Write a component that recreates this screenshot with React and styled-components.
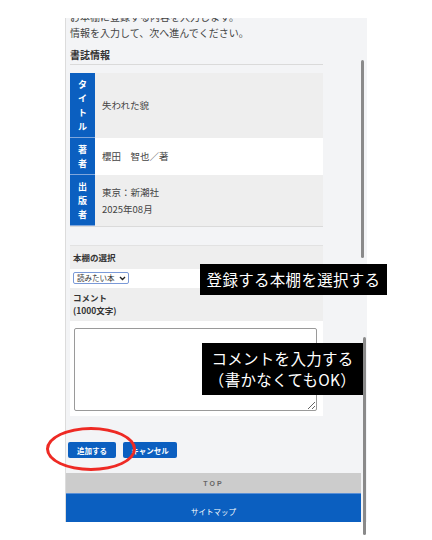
import styled, { createGlobalStyle } from "styled-components";

const blue = "#0b5fc0";
const jp = `"Noto Sans CJK JP", "Noto Sans", sans-serif`;

const Global = createGlobalStyle`
  html, body { margin: 0; background: #fff; }
  body { font-family: ${jp}; }
`;

const Page = styled.div`
  position: relative;
  width: 432px;
  height: 540px;
  padding: 18px 0 0 65px;
  box-sizing: border-box;
  overflow: hidden;
`;

const Screen = styled.div`
  width: 302px;
  height: 504px;
  background: #f3f4f6;
  border-left: 1px solid #dcdcdc;
  box-sizing: border-box;
  overflow: hidden;
  display: flex;
  flex-direction: column;
`;

const Content = styled.div`
  margin-top: -9px;
  padding: 0 0 0 4px;
  width: 253px;
`;

const Intro = styled.p`
  margin: 0;
  font-size: 10px;
  line-height: 16px;
  color: #444;
`;

const Heading = styled.h3`
  margin: 7px 0 0;
  padding-bottom: 2px;
  font-size: 10px;
  line-height: 14px;
  font-weight: 700;
  color: #333;
  border-bottom: 1px solid #dadada;
`;

const InfoTable = styled.div`
  margin-top: 8px;
  border-bottom: 1px solid #dadada;
`;

const InfoRow = styled.div`
  display: flex;
  height: ${(p) => p.$h}px;
  background: ${(p) => (p.$alt ? "#eeeeee" : "#fff")};
`;

const InfoHead = styled.div`
  width: 25px;
  flex: none;
  background: ${blue};
  border-bottom: 1px solid #7fa6dc;
  display: flex;
  flex-direction: column;
  align-items: center;
  justify-content: center;
  gap: 4px;
  color: #fff;
  font-size: 9px;
  font-weight: 700;
  line-height: 10px;
  box-sizing: border-box;
  padding-top: 1px;
`;

const InfoCell = styled.div`
  flex: 1;
  padding-left: 7px;
  display: flex;
  flex-direction: column;
  justify-content: center;
  font-size: 9.5px;
  line-height: 17px;
  color: #444;
`;

const FormTable = styled.div`
  margin-top: 18px;
  border-top: 1px solid #e2e2e2;
`;

const LabelRow = styled.div`
  background: #eeeeee;
  padding: ${(p) => p.$pad};
  font-size: 8.5px;
  font-weight: 700;
  line-height: 13px;
  color: #333;
`;

const FieldRow = styled.div`
  background: #fff;
  padding: ${(p) => p.$pad};
`;

const FakeSelect = styled.div`
  width: 56px;
  height: 12px;
  border: 1px solid #7b9ad8;
  border-radius: 2px;
  box-sizing: border-box;
  display: flex;
  align-items: center;
  justify-content: space-between;
  padding: 0 2px 0 3px;
  font-size: 7.5px;
  line-height: 10px;
  white-space: nowrap;
  color: #333;
`;

const TextArea = styled.textarea`
  display: block;
  width: 243px;
  height: 83px;
  box-sizing: border-box;
  border: 1px solid #9a9a9a;
  border-radius: 2px;
  background: #fff;
  resize: both;
  margin: 0;
`;

const Buttons = styled.div`
  display: flex;
  gap: 7px;
  margin: 26px 0 0 -2px;
`;

const Button = styled.div`
  width: ${(p) => p.$w}px;
  height: 16px;
  background: ${blue};
  border-radius: 2px;
  color: #fff;
  font-size: 7.5px;
  font-weight: 700;
  display: flex;
  align-items: center;
  justify-content: center;
`;

const TopBar = styled.div`
  margin-top: 15px;
  width: 295px;
  height: 20px;
  flex: none;
  background: #cccccc;
  color: #666;
  font-family: "Liberation Sans", sans-serif;
  font-size: 7px;
  font-weight: 700;
  letter-spacing: 2px;
  display: flex;
  align-items: center;
  justify-content: center;
`;

const SiteMap = styled.div`
  width: 295px;
  height: 29px;
  flex: none;
  background: ${blue};
  border-top: 1px solid #5a8fd6;
  box-sizing: border-box;
  color: #fff;
  font-size: 7.5px;
  display: flex;
  align-items: flex-end;
  justify-content: center;
  padding-bottom: 5px;
`;

const ScrollBar = styled.div`
  position: absolute;
  left: ${(p) => p.$x}px;
  top: ${(p) => p.$y}px;
  width: 3px;
  height: ${(p) => p.$h}px;
  background: #8a8a8a;
  border-radius: 2px;
`;

const Note = styled.div`
  position: absolute;
  left: ${(p) => p.$x}px;
  top: ${(p) => p.$y}px;
  width: ${(p) => p.$w}px;
  height: ${(p) => p.$h}px;
  background: #000;
  color: #fff;
  font-size: 15.5px;
  line-height: 21px;
  letter-spacing: 0.3px;
  display: flex;
  flex-direction: column;
  align-items: center;
  justify-content: center;
  text-align: center;
`;

const Circle = styled.div`
  position: absolute;
  left: 46px;
  top: 427px;
  width: 90px;
  height: 44px;
  border: 3px solid #ee2a24;
  border-radius: 50%;
  box-sizing: border-box;
`;

const rows = [
  { head: ["タ", "イ", "ト", "ル"], text: ["失われた貌"], h: 65, alt: true },
  { head: ["著", "者"], text: ["櫻田　智也／著"], h: 37, alt: false },
  { head: ["出", "版", "者"], text: ["東京：新潮社", "2025年08月"], h: 51, alt: true },
];

export default function App() {
  return (
    <>
      <Global />
      <Page>
        <Screen>
          <Content>
            <Intro>お本棚に登録する内容を入力します。</Intro>
            <Intro>情報を入力して、次へ進んでください。</Intro>
            <Heading>書誌情報</Heading>
            <InfoTable>
              {rows.map((r, i) => (
                <InfoRow key={i} $h={r.h} $alt={r.alt}>
                  <InfoHead>
                    {r.head.map((c, j) => (
                      <span key={j}>{c}</span>
                    ))}
                  </InfoHead>
                  <InfoCell>
                    {r.text.map((t, j) => (
                      <span key={j}>{t}</span>
                    ))}
                  </InfoCell>
                </InfoRow>
              ))}
            </InfoTable>
            <FormTable>
              <LabelRow $pad="5px 0 5px 3px">本棚の選択</LabelRow>
              <FieldRow $pad="3px 0 4px 3px">
                <FakeSelect>
                  読みたい本
                  <svg width="7" height="5" viewBox="0 0 7 5">
                    <path d="M1 1l2.5 2.5L6 1" fill="none" stroke="#222" strokeWidth="1.4" />
                  </svg>
                </FakeSelect>
              </FieldRow>
              <LabelRow $pad="3px 0 4px 3px">
                <div>コメント</div>
                <div>(1000文字)</div>
              </LabelRow>
              <FieldRow $pad="7px 0 5px 4px">
                <TextArea />
              </FieldRow>
            </FormTable>
            <Buttons>
              <Button $w={48}>追加する</Button>
              <Button $w={54}>キャンセル</Button>
            </Buttons>
          </Content>
          <TopBar>TOP</TopBar>
          <SiteMap>サイトマップ</SiteMap>
        </Screen>
        <ScrollBar $x={361} $y={60} $h={198} />
        <ScrollBar $x={363} $y={337} $h={198} />
        <Note $x={200} $y={264} $w={187} $h={31}>
          登録する本棚を選択する
        </Note>
        <Note $x={202} $y={343} $w={161} $h={52}>
          <span>コメントを入力する</span>
          <span>（書かなくてもOK）</span>
        </Note>
        <Circle />
      </Page>
    </>
  );
}
